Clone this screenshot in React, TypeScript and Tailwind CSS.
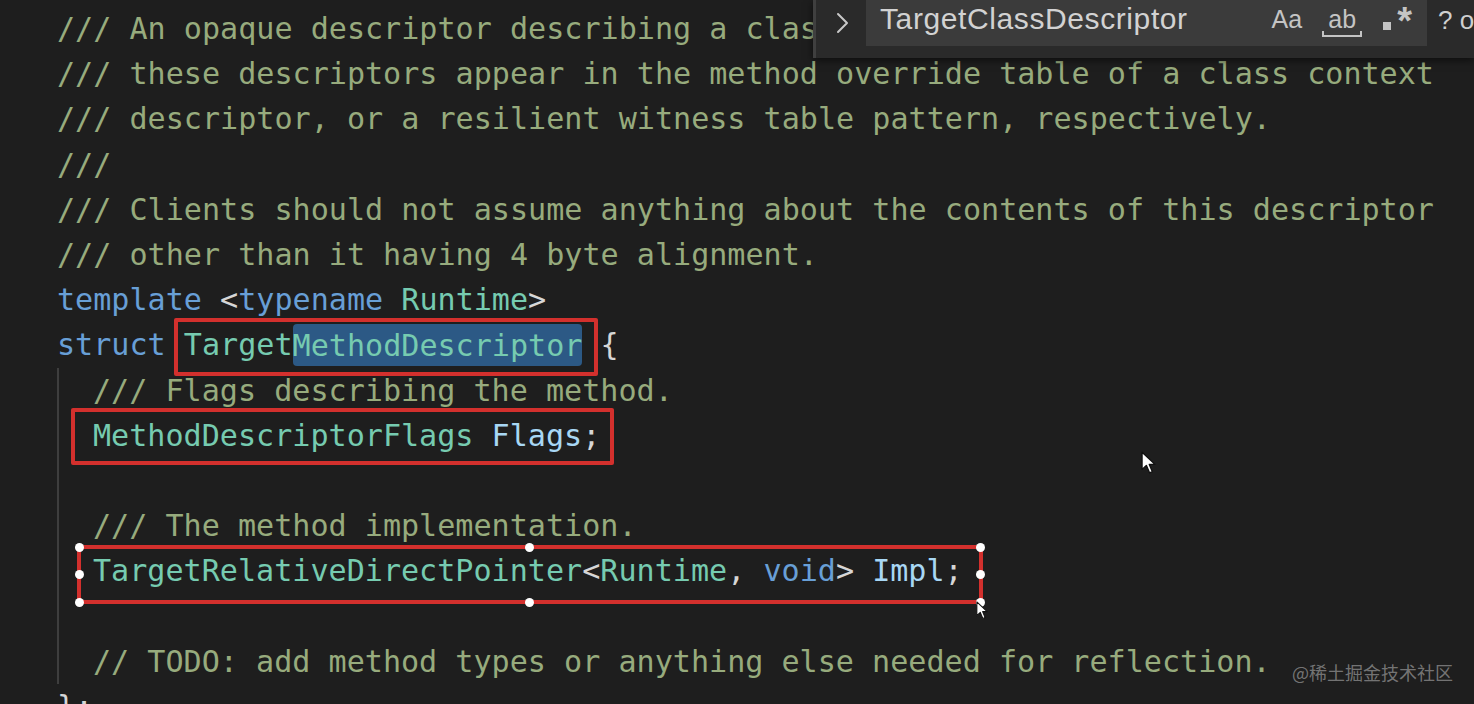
import type { ReactNode } from "react";

type Tok = [string, string];

const CM = "text-[#97ab7d]";
const KW = "text-[#689fd6]";
const TY = "text-[#76cbb0]";
const VR = "text-[#a8d7f4]";
const PU = "text-[#d6d6d6]";

function Line({ children }: { children?: ReactNode }) {
  return <div className="h-[45.2px] whitespace-pre">{children}</div>;
}

function Toks({ toks }: { toks: Tok[] }) {
  return (
    <>
      {toks.map(([t, c], i) => (
        <span key={i} className={c}>
          {t}
        </span>
      ))}
    </>
  );
}

// red annotation box drawn around a token run
function Boxed({
  children,
  box,
  handles = false,
}: {
  children: ReactNode;
  box: string;
  handles?: boolean;
}) {
  const dot = "absolute w-[9px] h-[9px] rounded-full bg-white";
  return (
    <span className="relative inline-block">
      {children}
      <span className={`absolute border-[4px] border-[#d3302d] rounded-[2px] ${box}`}>
        {handles && (
          <>
            <span className={`${dot} -left-[6.5px] -top-[6.5px]`} />
            <span className={`${dot} left-1/2 -ml-[4.5px] -top-[6.5px]`} />
            <span className={`${dot} -right-[6.5px] -top-[6.5px]`} />
            <span className={`${dot} -left-[6.5px] top-1/2 -mt-[4.5px]`} />
            <span className={`${dot} -right-[6.5px] top-1/2 -mt-[4.5px]`} />
            <span className={`${dot} -left-[6.5px] -bottom-[6.5px]`} />
            <span className={`${dot} left-1/2 -ml-[4.5px] -bottom-[6.5px]`} />
            <span className={`${dot} -right-[6.5px] -bottom-[6.5px]`} />
          </>
        )}
      </span>
    </span>
  );
}

function Pointer({ className }: { className: string }) {
  return (
    <svg className={className} viewBox="0 0 14 22" fill="none" aria-hidden="true">
      <path
        d="M1 1 L1 17 L5 13.2 L8 20.2 L10.6 19.1 L7.7 12.3 L13 12.3 Z"
        fill="#fff"
        stroke="#111"
        strokeWidth="1.2"
        strokeLinejoin="round"
      />
    </svg>
  );
}

function FindWidget() {
  const sans = "font-['Liberation_Sans',sans-serif] leading-none";
  return (
    <div className="absolute top-0 left-[813px] right-0 h-[58px] overflow-hidden bg-[#2a2a2a] border-l-[3px] border-[#3f3f3f] shadow-[0_2px_8px_rgba(0,0,0,0.6)] flex items-start">
      <div className="shrink-0 w-[50px] h-[46px] flex items-center justify-center pl-[2px]">
        <svg className="w-[18px] h-[26px]" viewBox="0 0 18 26" fill="none">
          <path d="M5 4 L14 13 L5 22" stroke="#c8c8c8" strokeWidth="2" strokeLinecap="round" strokeLinejoin="round" />
        </svg>
      </div>
      <div className="shrink-0 w-[561px] h-[46px] bg-[#3b3b3b] flex items-center pl-[14px] pr-[15px] pb-[8px]">
        <span className={`flex-1 ${sans} text-[30px] tracking-[0.6px] text-[#d2d2d2]`}>TargetClassDescriptor</span>
        <span className={`${sans} text-[25px] text-[#c4c4c4]`}>Aa</span>
        <span className="ml-[20px] flex flex-col items-center pt-[6px]">
          <span className={`${sans} text-[25px] text-[#c4c4c4]`}>ab</span>
          <span className="w-[40px] h-[6px] -mt-[1px] border-2 border-t-0 border-[#c4c4c4]" />
        </span>
        <span className="ml-[21px] flex items-end gap-[6px] -mt-[4px]">
          <span className="w-[8px] h-[8px] mb-[2px] bg-[#c4c4c4]" />
          <span className={`${sans} font-bold text-[38px] text-[#c4c4c4] h-[30px]`}>*</span>
        </span>
      </div>
      <div className={`shrink-0 h-[46px] flex items-center pl-[11px] pb-[6px] ${sans} text-[26px] text-[#cfcfcf] whitespace-pre`}>
        ? of 4
      </div>
    </div>
  );
}

export default function App() {
  return (
    <div className="relative w-[1474px] h-[704px] overflow-hidden bg-[#1e1e1e] font-['DejaVu_Sans_Mono',monospace] text-[30.1px] leading-[45.2px]">
      <div className="pt-[6px] pl-[57px]">
        <Line><span className={CM}>/// An opaque descriptor describing a class or protocol method. References to</span></Line>
        <Line><span className={CM}>/// these descriptors appear in the method override table of a class context</span></Line>
        <Line><span className={CM}>/// descriptor, or a resilient witness table pattern, respectively.</span></Line>
        <Line><span className={CM}>///</span></Line>
        <Line><span className={CM}>/// Clients should not assume anything about the contents of this descriptor</span></Line>
        <Line><span className={CM}>/// other than it having 4 byte alignment.</span></Line>
        <Line>
          <Toks toks={[["template", KW], [" <", PU], ["typename", KW], [" ", PU], ["Runtime", TY], [">", PU]]} />
        </Line>
        <Line>
          <span className={KW}>struct</span>{" "}
          <Boxed box="-left-[10px] -right-[16px] -top-[4px] -bottom-[8px]">
            <span className={TY}>Target</span>
            <span className={`${TY} bg-[#2c5985] rounded-[4px] py-[3.5px]`}>MethodDescriptor</span>
          </Boxed>{" "}
          <span className={PU}>{"{"}</span>
        </Line>
        <div className="border-l-2 border-[#3e3e3e] pl-[34px]">
          <Line><span className={CM}>/// Flags describing the method.</span></Line>
          <Line>
            <Boxed box="-left-[22px] -right-[14px] -top-[5px] -bottom-[7px]">
              <Toks toks={[["MethodDescriptorFlags", TY], [" ", PU], ["Flags", VR], [";", PU]]} />
            </Boxed>
          </Line>
          <Line />
          <Line><span className={CM}>/// The method implementation.</span></Line>
          <Line>
            <Boxed box="-left-[16px] -right-[20px] -top-[3px] -bottom-[11px]" handles>
              <Toks
                toks={[
                  ["TargetRelativeDirectPointer", TY],
                  ["<", PU],
                  ["Runtime", TY],
                  [", ", PU],
                  ["void", KW],
                  ["> ", PU],
                  ["Impl", VR],
                  [";", PU],
                ]}
              />
            </Boxed>
          </Line>
          <Line />
          <Line><span className={CM}>// TODO: add method types or anything else needed for reflection.</span></Line>
        </div>
        <Line><span className={PU}>{"};"}</span></Line>
      </div>

      <FindWidget />

      <Pointer className="absolute left-[1141px] top-[451px] w-[15px] h-[24px]" />
      <Pointer className="absolute left-[976px] top-[601px] w-[12px] h-[19px]" />

      <div className="absolute left-[1292px] top-[660px] font-['Noto_Sans_CJK_SC',sans-serif] text-[18px] leading-[24px] text-[#8c8c8c]/80">
        @稀土掘金技术社区
      </div>
    </div>
  );
}
